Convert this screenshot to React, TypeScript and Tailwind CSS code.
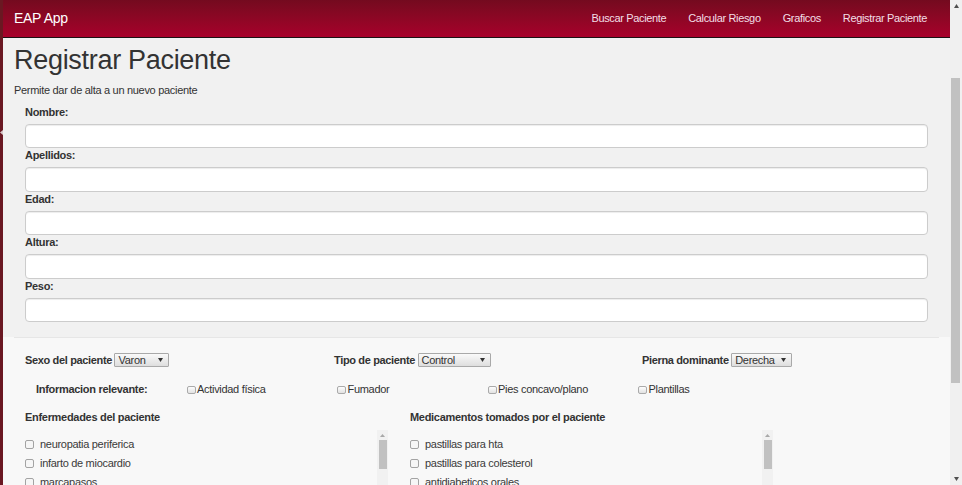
import React from "react";

function Field({ label }: { label: string }) {
  return (
    <div className="flex flex-col">
      <div className="mb-[5px] h-[14px] text-[11px] font-bold leading-[14px] tracking-[-0.3px] text-[#333]">{label}</div>
      <div className="h-[24.5px] rounded-[4px] border border-[#cccccc] bg-white shadow-[inset_0_1px_1px_rgba(0,0,0,0.075)]" />
    </div>
  );
}

function Arrow() {
  return (
    <svg width="5" height="4" viewBox="0 0 5 4" className="shrink-0">
      <path d="M0 0 L5 0 L2.5 4 Z" fill="#333" />
    </svg>
  );
}

function SelectBox({ value, width }: { value: string; width: string }) {
  return (
    <div className={`ml-[2.5px] flex h-[14px] items-center justify-between rounded-[1px] border border-[#a9a9a9] bg-gradient-to-b from-[#fafafa] to-[#dedede] pl-[3px] pr-[5px] ${width}`}>
      <span className="text-[11px] leading-[12px] tracking-[-0.3px] text-[#333]">{value}</span>
      <Arrow />
    </div>
  );
}

function SelectRow({ label, value, width }: { label: string; value: string; width: string }) {
  return (
    <div className="flex h-[15px] items-center">
      <span className="text-[11px] font-bold leading-[14px] tracking-[-0.35px] text-[#333]">{label}</span>
      <SelectBox value={value} width={width} />
    </div>
  );
}

function SmallCheck({ label }: { label: string }) {
  return (
    <div className="flex h-[14px] items-center">
      <div className="mt-[1px] h-[8px] w-[9px] rounded-[2px] border border-[#aaaaaa] bg-gradient-to-b from-[#fdfdfd] to-[#e2e2e2]" />
      <span className="ml-[1.5px] text-[11px] leading-[14px] tracking-[-0.3px] text-[#333]">{label}</span>
    </div>
  );
}

function ListBox({ items }: { items: string[] }) {
  return (
    <div className="flex h-[120px] w-[363px]">
      <div className="flex flex-1 flex-col pt-[4px]">
        {items.map((it) => (
          <div key={it} className="flex h-[19px] shrink-0 items-center">
            <div className="mt-[2px] h-[9px] w-[9px] rounded-[2px] border border-[#a3a3a3] bg-[#f6f6f6]" />
            <span className="ml-[6px] text-[11px] leading-[14px] tracking-[-0.3px] text-[#3a3a3a]">{it}</span>
          </div>
        ))}
      </div>
      <div className="flex w-[11px] flex-col items-center bg-[#f1f1f1]">
        <svg width="5" height="3" viewBox="0 0 5 3" className="mt-[4px]">
          <path d="M0 3 L5 3 L2.5 0 Z" fill="#a8a8a8" />
        </svg>
        <div className="mt-[3px] h-[29px] w-[8px] bg-[#c1c1c1]" />
      </div>
    </div>
  );
}

export default function App() {
  return (
    <div className="flex h-[485px] w-[962px] overflow-hidden bg-[#f1f1f1] font-['Liberation_Sans',Arial,sans-serif] text-[#333]">
      <div className="flex w-[3px] flex-col bg-[#6a1822]">
        <div className="h-[130px]" />
        <svg width="3" height="5" viewBox="0 0 3 5">
          <path d="M3 0 L3 5 L0 2.5 Z" fill="#d8c8ca" />
        </svg>
      </div>

      <div className="flex min-w-0 flex-1 flex-col">
        <nav className="flex h-[38px] shrink-0 items-center border-b border-[#1e1014] bg-gradient-to-b from-[#740a1f] to-[#a8002b] pl-[11px] pr-[23px]">
          <span className="text-[14px] tracking-[-0.3px] text-white">EAP App</span>
          <div className="ml-auto flex gap-[22px] text-[11px] tracking-[-0.35px] text-[#f3dfe6]">
            <span>Buscar Paciente</span>
            <span>Calcular Riesgo</span>
            <span>Graficos</span>
            <span>Registrar Paciente</span>
          </div>
        </nav>

        <div className="shrink-0 px-[11px] pb-[15px]">
          <h1 className="mt-[7px] text-[27px] leading-[30px] tracking-[-0.3px] text-[#333]">Registrar Paciente</h1>
          <p className="mt-[7.5px] text-[11px] leading-[14px] tracking-[-0.3px] text-[#333]">Permite dar de alta a un nuevo paciente</p>
          <div className="mt-[8px] flex flex-col px-[11px]">
            <Field label="Nombre:" />
            <Field label="Apellidos:" />
            <Field label="Edad:" />
            <Field label="Altura:" />
            <Field label="Peso:" />
          </div>
        </div>

        <div className="flex flex-1 flex-col bg-[#f8f8f8]">
          <div className="mx-[11px] border-t border-[#e6e6e6]" />
          <div className="mt-[14px] grid grid-cols-[309px_308px_1fr] pl-[22px]">
            <SelectRow label="Sexo del paciente" value="Varon" width="w-[55px]" />
            <SelectRow label="Tipo de paciente" value="Control" width="w-[73px]" />
            <SelectRow label="Pierna dominante" value="Derecha" width="w-[61px]" />
          </div>
          <div className="mt-[15px] grid grid-cols-[150.5px_150.5px_150.5px_150.5px_1fr] pl-[33px]">
            <div className="flex h-[14px] items-center text-[11px] font-bold leading-[14px] tracking-[-0.3px] text-[#333]">Informacion relevante:</div>
            <SmallCheck label="Actividad física" />
            <SmallCheck label="Fumador" />
            <SmallCheck label="Pies concavo/plano" />
            <SmallCheck label="Plantillas" />
          </div>
          <div className="mt-[14px] grid grid-cols-[385px_385px] pl-[22px]">
            <div className="flex flex-col">
              <div className="h-[14px] text-[11px] font-bold leading-[14px] tracking-[-0.3px] text-[#333]">Enfermedades del paciente</div>
              <div className="mt-[6px]">
                <ListBox items={["neuropatia periferica", "infarto de miocardio", "marcapasos"]} />
              </div>
            </div>
            <div className="flex flex-col">
              <div className="h-[14px] text-[11px] font-bold leading-[14px] tracking-[-0.3px] text-[#333]">Medicamentos tomados por el paciente</div>
              <div className="mt-[6px]">
                <ListBox items={["pastillas para hta", "pastillas para colesterol", "antidiabeticos orales"]} />
              </div>
            </div>
          </div>
        </div>
      </div>

      <div className="flex w-[12px] shrink-0 flex-col bg-[#f0f0f0]">
        <div className="flex h-[12px] items-center justify-center">
          <svg width="5" height="4" viewBox="0 0 5 4">
            <path d="M0 4 L5 4 L2.5 0 Z" fill="#505050" />
          </svg>
        </div>
        <div className="ml-[1px] mt-[66px] h-[305px] w-[8.5px] bg-[#c1c1c1]" />
        <div className="flex-1" />
        <div className="flex h-[12px] items-center justify-center">
          <svg width="5" height="4" viewBox="0 0 5 4">
            <path d="M0 0 L5 0 L2.5 4 Z" fill="#505050" />
          </svg>
        </div>
      </div>
    </div>
  );
}
